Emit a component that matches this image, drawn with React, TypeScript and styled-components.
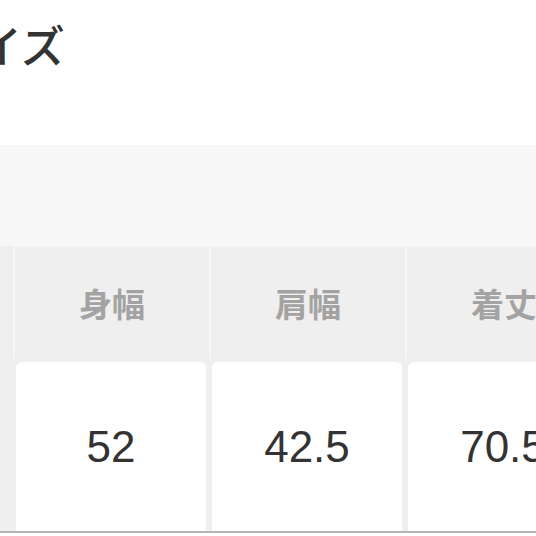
import React from 'react';
import styled, { createGlobalStyle } from 'styled-components';

const GlobalStyle = createGlobalStyle`
  html, body {
    margin: 0;
    padding: 0;
    background: #ffffff;
    overflow: hidden;
  }
`;

const Page = styled('div')`
  width: 536px;
  height: 536px;
  display: flex;
  flex-direction: column;
  overflow: hidden;
`;

const TitleBar = styled('div')`
  height: 145px;
  padding-top: 14px;
  box-sizing: border-box;
`;

const Title = styled('h2')`
  margin: 0 0 0 -66px;
  font-family: "Noto Sans CJK JP", "Noto Sans", sans-serif;
  font-size: 44px;
  font-weight: 500;
  line-height: 60px;
  color: #333333;
  white-space: nowrap;
`;

const TabBand = styled('div')`
  height: 101px;
  background: #f7f7f7;
`;

const Table = styled('div')`
  display: grid;
  grid-template-columns: repeat(3, 196px);
  grid-template-rows: 113px 172px;
  padding-left: 13px;
  background: #efefef;
  border-bottom: 2px solid #b4b4b4;
`;

const HeadCell = styled('div')`
  display: flex;
  align-items: center;
  justify-content: center;
  border-left: 2px solid #f6f6f6;
  border-top: 1px solid #f6f6f6;
  font-family: "Noto Sans CJK JP", "Noto Sans", sans-serif;
  font-size: 33px;
  font-weight: 700;
  color: #a3a3a3;
  white-space: nowrap;
`;

const ValueCell = styled('div')`
  display: flex;
  align-items: center;
  justify-content: center;
  margin: 3px 3px 0;
  background: #ffffff;
  border-radius: 6px 6px 0 0;
  font-family: "Liberation Sans", Arial, sans-serif;
  font-size: 44px;
  color: #333333;
  white-space: nowrap;
`;

const rows = [
  { label: '身幅', value: '52' },
  { label: '肩幅', value: '42.5' },
  { label: '着丈', value: '70.5' },
];

export default function App() {
  return (
    <Page>
      <GlobalStyle />
      <TitleBar>
        <Title>サイズ</Title>
      </TitleBar>
      <TabBand />
      <Table>
        {rows.map((r) => (
          <HeadCell key={r.label}>{r.label}</HeadCell>
        ))}
        {rows.map((r) => (
          <ValueCell key={r.label}>{r.value}</ValueCell>
        ))}
      </Table>
    </Page>
  );
}
